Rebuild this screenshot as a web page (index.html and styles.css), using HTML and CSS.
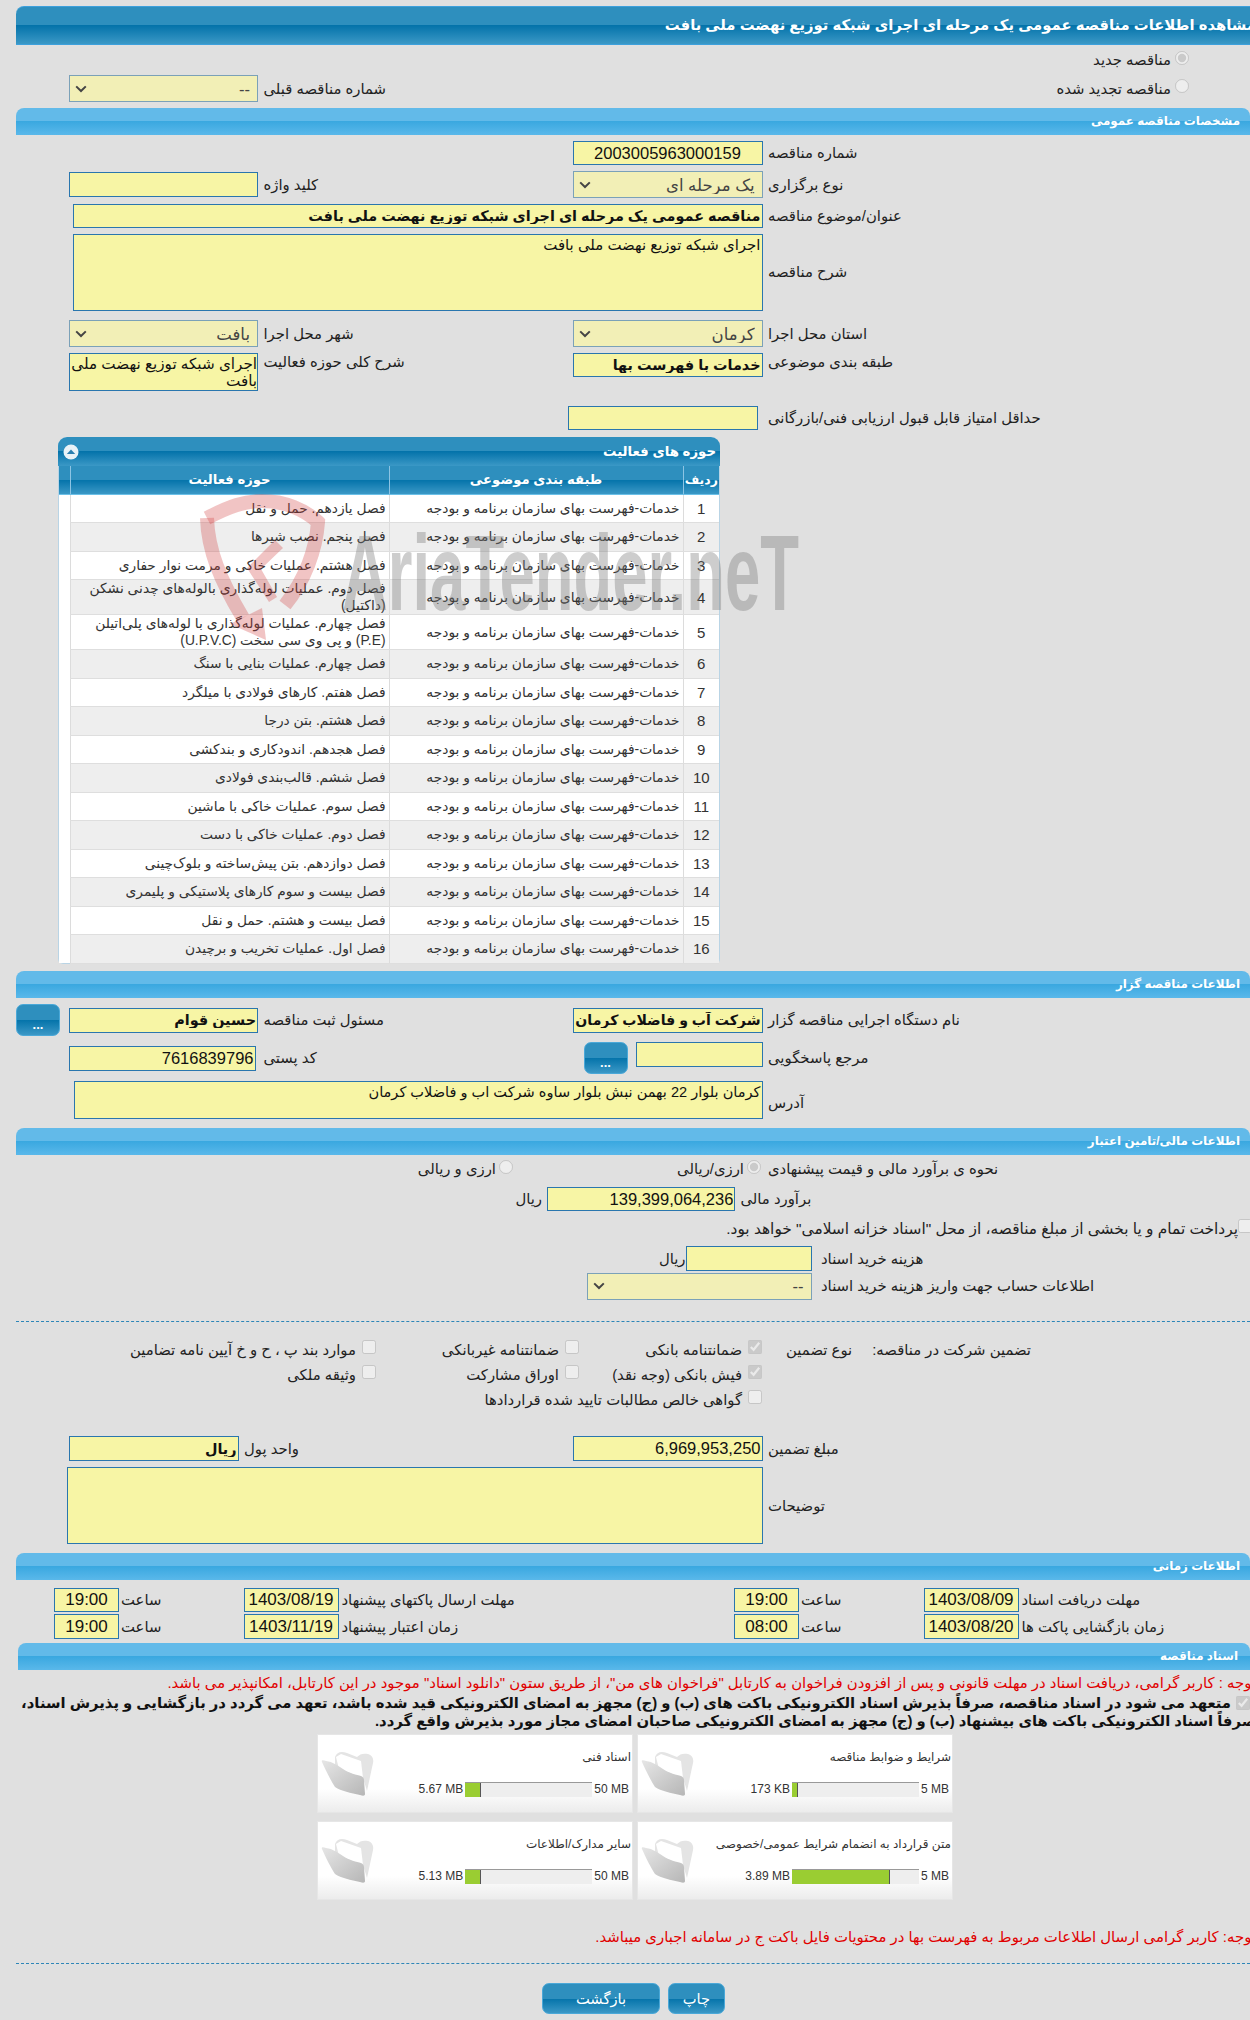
FILE: index.html
```html
<!DOCTYPE html>
<html lang="fa" dir="rtl">
<head>
<meta charset="utf-8">
<title>مشاهده اطلاعات مناقصه</title>
<link rel="stylesheet" href="styles.css">
</head>
<body>
<main class="page">
  <h1 class="title-bar">مشاهده اطلاعات مناقصه عمومی یک مرحله ای اجرای شبکه توزیع نهضت ملی بافت</h1>

  <section class="top-block">
    <div class="radio-line first-line"><input type="radio" disabled checked><span>مناقصه جدید</span></div>
    <div class="row">
      <div class="radio-line span2"><input type="radio" disabled><span>مناقصه تجدید شده</span></div>
      <span class="lbl l3">شماره مناقصه قبلی</span>
      <select class="sel w189" disabled><option>--</option></select>
    </div>
  </section>

  <h2 class="sec-bar">مشخصات مناقصه عمومی</h2>
  <section class="rows r1">
    <div class="row">
      <span class="lbl">شماره مناقصه</span>
      <div class="cell"><input class="inp w190 center num" readonly value="2003005963000159"></div>
    </div>
    <div class="row">
      <span class="lbl">نوع برگزاری</span>
      <div class="cell"><select class="sel w190" disabled><option>یک مرحله ای</option></select></div>
      <span class="lbl l3">کلید واژه</span>
      <input class="inp w189 h25" readonly>
    </div>
    <div class="row">
      <span class="lbl">عنوان/موضوع مناقصه</span>
      <div class="cell wide"><input class="inp w690 strong" readonly value="مناقصه عمومی یک مرحله ای اجرای شبکه توزیع نهضت ملی بافت"></div>
    </div>
    <div class="row">
      <span class="lbl">شرح مناقصه</span>
      <div class="cell wide"><textarea class="inp w690 area76" readonly>اجرای شبکه توزیع نهضت ملی بافت</textarea></div>
    </div>
    <div class="row gap10">
      <span class="lbl">استان محل اجرا</span>
      <div class="cell"><select class="sel w190" disabled><option>کرمان</option></select></div>
      <span class="lbl l3">شهر محل اجرا</span>
      <select class="sel w189" disabled><option>بافت</option></select>
    </div>
    <div class="row start">
      <span class="lbl">طبقه بندی موضوعی</span>
      <div class="cell"><input class="inp w190 strong" readonly value="خدمات با فهرست بها"></div>
      <span class="lbl l3">شرح کلی حوزه فعالیت</span>
      <textarea class="inp w189 area38 tight-area" readonly>اجرای شبکه توزیع نهضت ملی بافت</textarea>
    </div>
    <div class="row gap15">
      <span class="lbl">حداقل امتیاز قابل قبول ارزیابی فنی/بازرگانی</span>
      <div class="cell nudge"><input class="inp w190" readonly></div>
    </div>
  </section>

  <section class="panel">
    <div class="panel-title">
      <span>حوزه های فعالیت</span>
      <svg class="collapse" viewBox="0 0 16 16" aria-hidden="true"><circle cx="8" cy="8" r="7.5" fill="#e8f2f7"/><path d="M3.8 10 8 5.4 12.2 10Z" fill="#2b7fb0"/></svg>
    </div>
    <table class="activity">
      <thead><tr><th class="c-n">ردیف</th><th class="c-a">طبقه بندی موضوعی</th><th class="c-b">حوزه فعالیت</th><th class="c-x"></th></tr></thead>
      <tbody>
        <tr><td class="c-n">1</td><td>خدمات-فهرست بهای سازمان برنامه و بودجه</td><td>فصل یازدهم. حمل و نقل</td><td></td></tr>
        <tr><td class="c-n">2</td><td>خدمات-فهرست بهای سازمان برنامه و بودجه</td><td>فصل پنجم. نصب شیرها</td><td></td></tr>
        <tr><td class="c-n">3</td><td>خدمات-فهرست بهای سازمان برنامه و بودجه</td><td>فصل هشتم. عملیات خاکی و مرمت نوار حفاری</td><td></td></tr>
        <tr class="tall"><td class="c-n">4</td><td>خدمات-فهرست بهای سازمان برنامه و بودجه</td><td>فصل دوم. عملیات لوله‌گذاری بالوله‌های چدنی نشکن (داکتیل)</td><td></td></tr>
        <tr class="tall"><td class="c-n">5</td><td>خدمات-فهرست بهای سازمان برنامه و بودجه</td><td>فصل چهارم. عملیات لوله‌گذاری با لوله‌های پلی‌اتیلن (P.E) و پی وی سی سخت (U.P.V.C)</td><td></td></tr>
        <tr><td class="c-n">6</td><td>خدمات-فهرست بهای سازمان برنامه و بودجه</td><td>فصل چهارم. عملیات بنایی با سنگ</td><td></td></tr>
        <tr><td class="c-n">7</td><td>خدمات-فهرست بهای سازمان برنامه و بودجه</td><td>فصل هفتم. کارهای فولادی با میلگرد</td><td></td></tr>
        <tr><td class="c-n">8</td><td>خدمات-فهرست بهای سازمان برنامه و بودجه</td><td>فصل هشتم. بتن درجا</td><td></td></tr>
        <tr><td class="c-n">9</td><td>خدمات-فهرست بهای سازمان برنامه و بودجه</td><td>فصل هجدهم. اندودکاری و بندکشی</td><td></td></tr>
        <tr><td class="c-n">10</td><td>خدمات-فهرست بهای سازمان برنامه و بودجه</td><td>فصل ششم. قالب‌بندی فولادی</td><td></td></tr>
        <tr><td class="c-n">11</td><td>خدمات-فهرست بهای سازمان برنامه و بودجه</td><td>فصل سوم. عملیات خاکی با ماشین</td><td></td></tr>
        <tr><td class="c-n">12</td><td>خدمات-فهرست بهای سازمان برنامه و بودجه</td><td>فصل دوم. عملیات خاکی با دست</td><td></td></tr>
        <tr><td class="c-n">13</td><td>خدمات-فهرست بهای سازمان برنامه و بودجه</td><td>فصل دوازدهم. بتن پیش‌ساخته و بلوک‌چینی</td><td></td></tr>
        <tr><td class="c-n">14</td><td>خدمات-فهرست بهای سازمان برنامه و بودجه</td><td>فصل بیست و سوم کارهای پلاستیکی و پلیمری</td><td></td></tr>
        <tr><td class="c-n">15</td><td>خدمات-فهرست بهای سازمان برنامه و بودجه</td><td>فصل بیست و هشتم. حمل و نقل</td><td></td></tr>
        <tr><td class="c-n">16</td><td>خدمات-فهرست بهای سازمان برنامه و بودجه</td><td>فصل اول. عملیات تخریب و برچیدن</td><td></td></tr>
      </tbody>
    </table>
    <svg class="watermark" viewBox="0 0 620 160" aria-hidden="true">
      <g fill="none" stroke="#d03c3c" stroke-opacity=".3" stroke-width="14">
        <path d="M17 28C40 16 55 11 72 11c23 0 43 9 56 21-2 28-13 58-33 83"/>
        <path d="M17 28c1 32 13 62 36 100"/>
      </g>
      <path d="M40 134 72 118l4 32Z" fill="#d03c3c" fill-opacity=".3"/>
      <path d="M57 78 85 50l8 8-22 21 16 28-8 5-22-34Z" fill="#d03c3c" fill-opacity=".3"/>
      <text x="152" y="120" textLength="457" lengthAdjust="spacingAndGlyphs" class="wm-text">AriaTender.neT</text>
    </svg>
  </section>

  <h2 class="sec-bar mt7">اطلاعات مناقصه گزار</h2>
  <section class="rows r2">
    <div class="row">
      <span class="lbl">نام دستگاه اجرایی مناقصه گزار</span>
      <div class="cell"><input class="inp w190 h25 strong strong-s" readonly value="شرکت آب و فاضلاب کرمان"></div>
      <span class="lbl l3">مسئول ثبت مناقصه</span>
      <input class="inp w189 h25 strong" readonly value="حسین قوام">
      <button class="btn dots far" type="button">...</button>
    </div>
    <div class="row">
      <span class="lbl">مرجع پاسخگویی</span>
      <div class="cell ref"><input class="inp w127 h25 self-top" readonly><button class="btn dots" type="button">...</button></div>
      <span class="lbl l3">کد پستی</span>
      <input class="inp w186 h25 num to-left" readonly value="7616839796">
    </div>
    <div class="row gap7">
      <span class="lbl lbl-low">آدرس</span>
      <div class="cell wide"><textarea class="inp w689 area38" readonly>کرمان بلوار 22 بهمن نبش بلوار ساوه شرکت اب و فاضلاب کرمان</textarea></div>
    </div>
  </section>

  <h2 class="sec-bar mt9">اطلاعات مالی/تامین اعتبار</h2>
  <section class="finance">
    <div class="fin-line radios">
      <span class="lbl fix482">نحوه ی برآورد مالی و قیمت پیشنهادی</span>
      <input type="radio" class="first-radio" disabled checked><span class="opt">ارزی/ریالی</span>
      <input type="radio" disabled><span class="opt2">ارزی و ریالی</span>
    </div>
    <div class="fin-line estimate">
      <span class="lbl fix514">برآورد مالی</span>
      <input class="inp w188 num" readonly value="139,399,064,236">
      <span class="unit">ریال</span>
    </div>
    <div class="fin-line treasury">
      <input type="checkbox" class="clip-box" disabled>
      <span>پرداخت تمام و یا بخشی از مبلغ مناقصه، از محل "اسناد خزانه اسلامی" خواهد بود.</span>
    </div>
    <div class="fin-line purchase">
      <span class="lbl fix438">هزینه خرید اسناد</span>
      <input class="inp w126 h25" readonly>
      <span class="unit flush">ریال</span>
    </div>
    <div class="fin-line account">
      <span class="lbl fix438">اطلاعات حساب جهت واریز هزینه خرید اسناد</span>
      <select class="sel w225 h26" disabled><option>--</option></select>
    </div>
  </section>

  <hr class="dash d1">

  <section class="guarantee">
    <div class="g-head"><span>تضمین شرکت در مناقصه:</span><span>نوع تضمین</span></div>
    <div class="g-grid">
      <label class="chk"><input type="checkbox" disabled checked>ضمانتنامه بانکی</label>
      <label class="chk"><input type="checkbox" disabled>ضمانتنامه غیربانکی</label>
      <label class="chk"><input type="checkbox" disabled>موارد بند پ ، ح و خ آیین نامه تضامین</label>
      <label class="chk"><input type="checkbox" disabled checked>فیش بانکی (وجه نقد)</label>
      <label class="chk"><input type="checkbox" disabled>اوراق مشارکت</label>
      <label class="chk"><input type="checkbox" disabled>وثیقه ملکی</label>
      <label class="chk span3"><input type="checkbox" disabled>گواهی خالص مطالبات تایید شده قراردادها</label>
    </div>
  </section>

  <section class="rows">
    <div class="row money">
      <span class="lbl">مبلغ تضمین</span>
      <div class="cell"><input class="inp w190 h25 num" readonly value="6,969,953,250"></div>
      <span class="lbl l3">واحد پول</span>
      <input class="inp w170 h25 strong" readonly value="ریال">
    </div>
    <div class="row">
      <span class="lbl">توضیحات</span>
      <div class="cell wide"><textarea class="inp w696 area77" readonly></textarea></div>
    </div>
  </section>

  <h2 class="sec-bar mt9">اطلاعات زمانی</h2>
  <section class="times">
    <span class="lbl">مهلت دریافت اسناد</span>
    <input class="inp w95 center" readonly value="1403/08/09">
    <span class="lbl l2">ساعت</span>
    <input class="inp w65 center" readonly value="19:00">
    <span class="lbl">مهلت ارسال پاکتهای پیشنهاد</span>
    <input class="inp w95 center" readonly value="1403/08/19">
    <span class="lbl l2">ساعت</span>
    <input class="inp w65 center" readonly value="19:00">
    <span class="lbl">زمان بازگشایی پاکت ها</span>
    <input class="inp w95 h25 center" readonly value="1403/08/20">
    <span class="lbl l2">ساعت</span>
    <input class="inp w65 h25 center" readonly value="08:00">
    <span class="lbl">زمان اعتبار پیشنهاد</span>
    <input class="inp w95 h25 center" readonly value="1403/11/19">
    <span class="lbl l2">ساعت</span>
    <input class="inp w65 h25 center" readonly value="19:00">
  </section>

  <h2 class="sec-bar docs-bar">اسناد مناقصه</h2>
  <section class="docs">
    <p class="red first">توجه : کاربر گرامی، دریافت اسناد در مهلت قانونی و پس از افزودن فراخوان به کارتابل "فراخوان های من"، از طریق ستون "دانلود اسناد" موجود در این کارتابل، امکانپذیر می باشد.</p>
    <p class="commit"><input type="checkbox" disabled checked>متعهد می شود در اسناد مناقصه، صرفاً بذیرش اسناد الکترونیکی باکت های (ب) و (ج) مجهز به امضای الکترونیکی قید شده باشد، تعهد می گردد در بازگشایی و پذیرش اسناد،<br>صرفاً اسناد الکترونیکی باکت های بیشنهاد (ب) و (ج) مجهز به امضای الکترونیکی صاحبان امضای مجاز مورد بذیرش واقع گردد.</p>
    <div class="cards">
      <article class="card">
        <div class="card-text"><div class="card-title">شرایط و ضوابط مناقصه</div>
          <div class="meter"><span>5 MB</span><div class="bar"><i class="fill" style="width:5%"></i></div><span>173 KB</span></div></div>
        <svg class="folder" viewBox="0 0 54 46" aria-hidden="true"><use href="#fld"/></svg>
      </article>
      <article class="card">
        <div class="card-text"><div class="card-title">اسناد فنی</div>
          <div class="meter"><span>50 MB</span><div class="bar"><i class="fill" style="width:12.6%"></i></div><span>5.67 MB</span></div></div>
        <svg class="folder" viewBox="0 0 54 46" aria-hidden="true"><use href="#fld"/></svg>
      </article>
      <article class="card">
        <div class="card-text"><div class="card-title">متن قرارداد به انضمام شرایط عمومی/خصوصی</div>
          <div class="meter"><span>5 MB</span><div class="bar"><i class="fill" style="width:77%"></i></div><span>3.89 MB</span></div></div>
        <svg class="folder" viewBox="0 0 54 46" aria-hidden="true"><use href="#fld"/></svg>
      </article>
      <article class="card">
        <div class="card-text"><div class="card-title">سایر مدارک/اطلاعات</div>
          <div class="meter"><span>50 MB</span><div class="bar"><i class="fill" style="width:12%"></i></div><span>5.13 MB</span></div></div>
        <svg class="folder" viewBox="0 0 54 46" aria-hidden="true"><use href="#fld"/></svg>
      </article>
    </div>
    <p class="red last">توجه: کاربر گرامی ارسال اطلاعات مربوط به فهرست بها در محتویات فایل باکت ج در سامانه اجباری میباشد.</p>
  </section>

  <hr class="dash d2">
  <div class="actions">
    <button class="btn print" type="button">چاپ</button>
    <button class="btn back" type="button">بازگشت</button>
  </div>
</main>
<svg class="defs" aria-hidden="true">
  <defs>
    <linearGradient id="fg" x1="0" y1="0" x2="1" y2="1"><stop offset="0" stop-color="#e6e6e6"/><stop offset="1" stop-color="#b6b6b6"/></linearGradient>
    <symbol id="fld" viewBox="0 0 54 46">
      <path d="M14 6C16 1 20 0 26 2L36 6C39 3 42 2 47 3 51 4 53 8 52 12L46 40 42 27 14 18Z" fill="#e4e4e4"/>
      <path d="M15 6 20 3 40 10 42 27 18 18Z" fill="#fff"/>
      <path d="M1 11C0 9 2 9 5 10 12 11 16 14 22 18 28 22 36 24 40 25 42 26 43 27 43 29L44 43C44 45 42 45 39 44 30 42 20 40 14 36 10 30 4 18 1 11Z" fill="url(#fg)"/>
    </symbol>
  </defs>
</svg>
</body>
</html>
```
FILE: styles.css
```css
* { box-sizing: border-box; }
html, body { margin: 0; padding: 0; }
body {
  width: 1250px; height: 2020px; overflow: hidden; background: #e0e0e0;
  font-family: "Liberation Sans", "DejaVu Sans", sans-serif; font-size: 14.85px; color: #222;
}
.page { padding: 6px 0 0 16px; width: 1250px; }
.defs { position: absolute; width: 0; height: 0; }
h1, h2, p { margin: 0; font-weight: normal; }
.title-bar {
  height: 39px; line-height: 37px; margin-right: -6px; font-size: 14.8px; font-weight: bold; color: #fff;
  border: 1px solid #3da0dc; border-width: 1px 0; border-top-left-radius: 8px; white-space: nowrap;
  background: linear-gradient(#2e8fbe 0 50%, #0473aa 50%, #3b98c6 100%);
}
.sec-bar {
  height: 27px; line-height: 26px; padding-right: 10px; font-size: 11.9px; font-weight: bold; color: #fff;
  border-radius: 8px 8px 0 0;
  background: linear-gradient(#62bae9 0 50%, #3aa8e0 50%, #5ab8ea 100%);
}
.row { display: grid; grid-template-columns: 482px 195px 315px 189px 53px; align-items: center; }
.rows .row + .row { margin-top: 6px; }
.rows .row.gap10 { margin-top: 9.5px; }
.rows .row.gap15 { margin-top: 15px; }
.rows .row.gap7 { margin-top: 7px; }
.start { align-items: start; }
.top-block { height: 63px; }
.radio-line { display: flex; align-items: center; padding-right: 61px; gap: 4px; white-space: nowrap; }
.first-line { height: 30px; }
.span2 { grid-column: 1 / 3; }
input[type=radio], input[type=checkbox] { margin: -5px 0 0; width: 14px; height: 14px; flex: none; }
.lbl { white-space: nowrap; text-align: left; }
.l3 { margin-left: 5.5px; }
.r1 { padding-top: 6px; height: 295px; }
.r2 { padding-top: 6px; }
.cell { padding-right: 5.5px; display: flex; }
.wide { grid-column: 2 / -1; }
.nudge { padding-right: 10px; }
.ref { gap: 8px; }
.self-top { align-self: flex-start; }
.far { margin-right: 9px; }
.lbl-low { margin-top: 6px; }
.to-left { justify-self: end; }
.money { grid-template-columns: 482px 195px 334.5px 170px 52.5px; }
.inp {
  display: block; margin: 0; padding: 0 2px; height: 24px; border: 1px solid #2a76ae; border-radius: 0; background: #f7f5a5; color: #111;
  font-family: "Liberation Sans", "DejaVu Sans", sans-serif; font-size: 17px; outline: none; direction: rtl; text-align: right;
}
textarea.inp { resize: none; font-size: 14.95px; line-height: 18px; overflow: hidden; padding: 1px 1px 0; }
textarea.w689 { font-size: 14.55px; }
textarea.tight-area { font-size: 15.2px; line-height: 17px; padding: 1px 0 0; }
.w190 { width: 190px; } .w189 { width: 189px; } .w188 { width: 188.4px; } .w186 { width: 186.5px; } .w170 { width: 170px; } .w127 { width: 127px; } .w126 { width: 126px; } .w225 { width: 224.5px; }
.w95 { width: 95px; } .w65 { width: 65px; } .w690 { width: 689.5px; } .w689 { width: 688.5px; } .w696 { width: 695.5px; }
.h25 { height: 25px; }
.h26 { height: 26px; }
.center { text-align: center; }
.num { font-size: 16.5px; padding: 0 1px; }
.strong { font-weight: bold; font-size: 14.4px; padding: 0 1px; }
.strong-s { font-size: 14.1px; }
.area76 { height: 76.5px; }
.area38 { height: 38px; }
.area77 { height: 77px; }
.sel {
  appearance: none; height: 27px; margin: 0; border: 1px solid #7ba1b8; border-radius: 0; color: #444; opacity: 1;
  background: #f2efb6 url("data:image/svg+xml,%3Csvg xmlns='http://www.w3.org/2000/svg' width='12' height='8'%3E%3Cpath d='M1.2 1.4 6 6l4.8-4.6' fill='none' stroke='%23444' stroke-width='2'/%3E%3C/svg%3E") no-repeat left 5px center;
  font-family: "Liberation Sans", "DejaVu Sans", sans-serif; font-size: 16.5px; padding: 0 7px 0 20px;
}

.panel { position: relative; width: 662px; margin: 7px 530px 0 0; height: 527px; border: 1px solid #b9d4e5; border-top: 0; border-radius: 9px 9px 5px 5px; background: #fff; }
.panel-title { display: flex; align-items: center; justify-content: space-between; height: 29px; margin: 0 -1px; padding: 0 4px 0 5px; color: #fff; font-weight: bold; font-size: 13.3px; border-radius: 9px 9px 0 0; background: linear-gradient(#2e8fbe 0 50%, #0473aa 50%, #3b98c6 100%); }
.collapse { width: 16px; height: 16px; }
.activity { width: 100%; border-collapse: collapse; table-layout: fixed; font-size: 13.8px; color: #333; }
.activity th { height: 28px; color: #fff; font-size: 13.2px; font-weight: bold; border-left: 1px solid #8cc4e4; border-bottom: 1px solid #6bc0e8; background: linear-gradient(#2e8fbe 0 50%, #0473aa 50%, #3b98c6 100%); padding: 0; }
.activity th:last-child { border-left: 0; }
.activity th.c-n { font-size: 12.5px; }
.activity td { height: 28.5px; padding: 0 3px; border-left: 1px solid #dcdcdc; border-bottom: 1px solid #dedede; line-height: 17px; text-align: right; }
.activity td.c-n { text-align: center; font-size: 15px; padding: 0; }
.activity tbody tr:nth-child(even) { background: #eeeeee; }
.activity tr.tall td { height: 35px; }
.activity td:last-child { border-left: 0; border-bottom: 0; background: #fff; }
.c-n { width: 36px; } .c-a { width: 294px; } .c-b { width: 319px; } .c-x { width: 11px; }
.watermark { position: absolute; left: 131px; top: 53px; width: 620px; height: 160px; pointer-events: none; direction: ltr; }
.wm-text { direction: ltr; font-family: "Liberation Sans", sans-serif; font-weight: bold; font-size: 107px; fill: #777; fill-opacity: .37; }

.mt7 { margin-top: 7px; }
.mt9 { margin-top: 9px; }
.btn { border: 1px solid #4aa8d8; border-radius: 7px; color: #fff; font-family: "Liberation Sans", "DejaVu Sans", sans-serif; background: linear-gradient(#2e8fbe 0 50%, #0473aa 50%, #3b98c6 100%); padding: 0; }
.dots { width: 44px; height: 32px; font-size: 13px; font-weight: bold; padding-top: 8px; flex: none; }

.fin-line { display: flex; align-items: center; white-space: nowrap; }
.radios { height: 28px; }
.estimate { margin-top: 4px; height: 24px; }
.fix482 { width: 482px; flex: none; }
.fix514 { width: 514.6px; padding-left: 5px; flex: none; }
.fix438 { width: 438.5px; padding-left: 9.5px; flex: none; }
input.first-radio { margin-right: 7px; }
.opt { width: 231px; margin-right: 3px; }
.opt2 { margin-right: 3px; }
.unit { margin-right: 5px; }
.flush { margin-right: 0; }
.treasury { height: 35px; font-size: 15.4px; }
input.clip-box { margin-right: -2px; }
.purchase { height: 25px; }
.account { height: 26px; margin-top: 2px; }
.dash { border: 0; border-top: 1px dashed #2d86b8; margin: 0; }
.d1 { margin-top: 22px; }
.guarantee { display: flex; height: 114px; padding-top: 19px; }
.g-head { width: 488px; flex: none; display: flex; gap: 20px; padding-right: 219px; align-items: flex-start; white-space: nowrap; }
.g-grid { display: grid; grid-template-columns: 183px 203px auto; grid-auto-rows: 17px; row-gap: 8px; }
.chk { display: flex; align-items: center; gap: 6px; height: 17px; white-space: nowrap; }
.span3 { grid-column: 1 / -1; }
.times { display: grid; grid-template-columns: 228.5px 98px 124.5px 65px 392.5px 98px 124.5px 65px; row-gap: 2px; padding: 8px 0 4px; align-items: center; }
.times .inp { justify-self: end; }
.l2 { margin-left: 2px; }
.docs-bar { margin-left: 2px; padding-right: 12px; }
.red { color: #e00000; white-space: nowrap; font-size: 14.9px; }
.first { margin-right: -6px; height: 24px; line-height: 26px; }
.commit { margin-right: -6px; font-weight: bold; color: #111; line-height: 18px; font-size: 14.8px; white-space: nowrap; height: 36px; }
.commit input { margin: 0 6px 0 5px; vertical-align: -2px; }
.cards { display: grid; grid-template-columns: 316px 316px; gap: 8px 4px; width: 636px; margin: 4px 297px 0 0; }
.card { display: flex; height: 79px; padding: 14px 3px 0 3px; border: 1px solid #e6e6e6; background: linear-gradient(#fff 70%, #ececec); }
.card-text { flex: 1; display: flex; flex-direction: column; }
.card-title { height: 32px; font-size: 12px; line-height: 16px; color: #333; margin-right: -2px; }
.meter { display: flex; align-items: center; gap: 2px; font-size: 12px; direction: ltr; flex-direction: row-reverse; height: 16px; color: #333; }
.meter span { white-space: nowrap; }
.bar { width: 127px; height: 15px; background: #eee; border-top: 1px solid #999; display: flex; }
.fill { display: block; height: 100%; background: #9acd32; border-right: 1px solid #555; }
.folder { width: 54px; height: 46px; margin-top: 2px; flex: none; }
.last { margin-right: -6px; margin-top: 27px; height: 20px; line-height: 20px; }
.d2 { margin-top: 16px; }
.actions { display: flex; gap: 8px; margin-top: 19px; margin-right: 525px; }
.print { width: 57px; height: 31px; font-size: 14.7px; }
.back { width: 118px; height: 31px; font-size: 14.7px; }
```
